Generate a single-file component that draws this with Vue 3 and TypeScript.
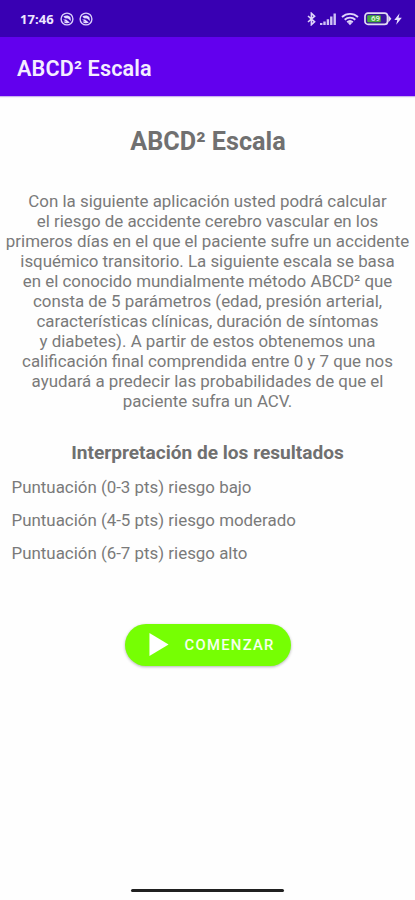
<script setup lang="ts">
const introLines: string[] = [
  'Con la siguiente aplicación usted podrá calcular',
  'el riesgo de accidente cerebro vascular en los',
  'primeros días en el que el paciente sufre un accidente',
  'isquémico transitorio. La siguiente escala se basa',
  'en el conocido mundialmente método ABCD² que',
  'consta de 5 parámetros (edad, presión arterial,',
  'características clínicas, duración de síntomas',
  'y diabetes). A partir de estos obtenemos una',
  'calificación final comprendida entre 0 y 7 que nos',
  'ayudará a predecir las probabilidades de que el',
  'paciente sufra un ACV.',
]

const results: string[] = [
  'Puntuación (0-3 pts) riesgo bajo',
  'Puntuación (4-5 pts) riesgo moderado',
  'Puntuación (6-7 pts) riesgo alto',
]
</script>

<template>
  <div class="screen">
    <div class="status">
      <span class="clock">17:46</span>
      <svg v-for="n in 2" :key="n" class="notice" viewBox="0 0 14 14">
        <circle cx="7" cy="7" r="5.9" fill="none" stroke="#d9ccfb" stroke-width="1.4" />
        <path d="M3.4 4.6C5.4 3 8.8 3 10.4 5.2L11 9L8 6.4L5 6.2ZM3 7.6L6 7.4L9.8 10.6C7.4 12 4.6 11.4 3.6 9.4L6 9.6Z" fill="#e4daff" />
      </svg>
      <div class="system">
        <svg class="bluetooth" viewBox="0 0 9 14">
          <path d="M1 4L7.6 9.8L4.4 12.7V1.3L7.6 4.2L1 10" fill="none" stroke="#ded4fa" stroke-width="1.6" />
        </svg>
        <svg class="signal" viewBox="0 0 16 13">
          <path d="M0 10h2.4v2H0zM3.3 8.5h2.4V12H3.3zM6.7 6.3h2.4V12H6.7zM10.1 3.6h2.4V12h-2.4zM13.5 .5h2.4V12h-2.4z" fill="#cfc2f5" />
        </svg>
        <svg class="wifi" viewBox="0 0 18 14">
          <path d="M1 5C5.5 .8 12.5 .8 17 5M3.7 7.7C6.7 4.9 11.3 4.9 14.3 7.7M6.2 10.3C7.8 8.8 10.2 8.8 11.8 10.3" fill="none" stroke="#ded4fa" stroke-width="1.9" />
          <path d="M6.8 10.8Q9 9 11.2 10.8L9 13.2Z" fill="#ded4fa" />
        </svg>
        <div class="battery">
          <svg viewBox="0 0 28 14">
            <rect x="1" y="1.2" width="22.5" height="11.2" rx="3" fill="#3b13a0" stroke="#e2dcf5" stroke-width="1.7" />
            <path d="M24.3 3L27.4 6.8L24.3 10.6Z" fill="#e2dcf5" />
            <rect x="3.2" y="3.3" width="13.6" height="7" rx="1" fill="#43aa3c" />
          </svg>
          <span class="level">69</span>
        </div>
        <svg class="bolt" viewBox="0 0 8 12">
          <path d="M5.6 .3L.3 6.9H3.3L2.2 11.7L7.8 4.8H4.5Z" fill="#e6ddff" />
        </svg>
      </div>
    </div>

    <header class="toolbar">ABCD² Escala</header>

    <main>
      <h1>ABCD² Escala</h1>
      <p class="intro">
        <span v-for="line in introLines" :key="line">{{ line }}</span>
      </p>
      <h2>Interpretación de los resultados</h2>
      <ul>
        <li v-for="result in results" :key="result">{{ result }}</li>
      </ul>
      <button type="button">
        <svg viewBox="0 0 20 24"><path d="M0 0L20 12L0 24Z" fill="#fff" /></svg>
        <span>COMENZAR</span>
      </button>
    </main>

    <div class="home"></div>
  </div>
</template>

<style>
body {
  background: #fefefe;
}
</style>

<style scoped>
.screen {
  display: flex;
  flex-direction: column;
  box-sizing: border-box;
  width: 415px;
  height: 900px;
  overflow: hidden;
  background: #fefefe;
  color: #7a7a7a;
  font-family: Roboto, sans-serif;
}
.status {
  display: flex;
  align-items: center;
  flex: none;
  box-sizing: border-box;
  height: 37px;
  padding: 1px 13px 0 20px;
  background: #3900b3;
  color: #eee7ff;
}
.clock {
  width: 40px;
  font: 700 13px/16px "Noto Sans", sans-serif;
  letter-spacing: 0.1px;
}
.notice {
  width: 14px;
  height: 14px;
  margin-right: 5px;
}
.system {
  display: flex;
  align-items: center;
  margin-left: auto;
}
.bluetooth {
  width: 9px;
  height: 14px;
  margin-right: 4px;
}
.signal {
  width: 16px;
  height: 13px;
  margin-right: 5px;
}
.wifi {
  width: 18px;
  height: 14px;
  margin-right: 5px;
}
.battery {
  position: relative;
  width: 28px;
  height: 14px;
  margin-right: 2px;
}
.battery svg {
  display: block;
  width: 28px;
  height: 14px;
}
.level {
  position: absolute;
  top: 2px;
  left: 7px;
  font: 700 8px/10px Roboto, sans-serif;
  color: #d9e9d9;
}
.bolt {
  width: 8px;
  height: 12px;
}
.toolbar {
  flex: none;
  box-sizing: border-box;
  height: 59px;
  padding-left: 17px;
  background: #6200ee;
  color: #f4edff;
  font-size: 21.6px;
  font-weight: 600;
  letter-spacing: 0.15px;
  line-height: 63px;
  box-shadow: 0 1px 1px #c9b2ee;
}
main {
  display: flex;
  flex-direction: column;
}
h1 {
  margin: 31px 0 0;
  padding-left: 1px;
  color: #707070;
  font-size: 25.2px;
  font-weight: 700;
  line-height: 30px;
  text-align: center;
}
.intro {
  display: flex;
  flex-direction: column;
  margin: 34px 0 0;
  font-size: 16.9px;
  line-height: 20px;
  text-align: center;
  white-space: nowrap;
}
h2 {
  margin: 31px 0 0;
  color: #707070;
  font-size: 19.1px;
  font-weight: 700;
  line-height: 22px;
  text-align: center;
}
ul {
  margin: 6.7px 0 0;
  padding: 0 0 0 11.5px;
  list-style: none;
}
li {
  height: 33.3px;
  font-size: 16.9px;
  line-height: 33.3px;
}
button {
  display: flex;
  align-items: center;
  align-self: center;
  box-sizing: border-box;
  width: 166px;
  height: 42px;
  margin: 53.3px 0 0;
  padding: 0 0 0 24px;
  border: 0;
  border-radius: 21px;
  background: #76ff03;
  box-shadow: 0 1px 3px rgba(0, 0, 0, 0.3);
  color: #f8fff0;
  font: 500 14.8px/20px Roboto, sans-serif;
  letter-spacing: 1.3px;
}
button svg {
  width: 20px;
  height: 23px;
  margin-right: 16px;
}
.home {
  align-self: center;
  width: 153px;
  height: 3px;
  margin: auto 0 8px;
  border-radius: 2px;
  background: #202020;
}
</style>
